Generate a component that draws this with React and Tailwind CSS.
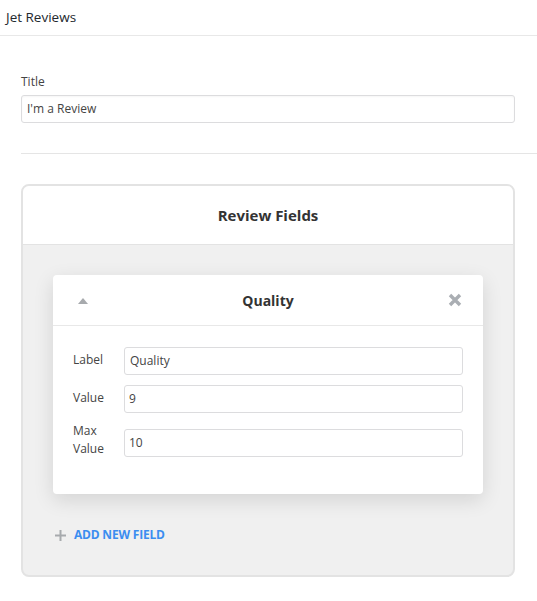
export default function App() {
  const font = { fontFamily: '"Open Sans", "Noto Sans", sans-serif' };
  return (
    <div className="w-[537px] h-[601px] bg-white text-[#444]" style={font}>
      <div className="h-[36px] border-b border-[#e8e8e8] pl-[6px] flex items-center text-[13.5px] text-[#23282d]">
        Jet Reviews
      </div>
      <div className="pl-[21px]">
        <div className="pt-[37px] pr-[22px]">
          <div className="text-[12px] text-[#444] leading-[16px] mt-[1px]">Title</div>
          <div className="mt-[5px] h-[28px] border border-[#dcdcde] rounded-[3px] flex items-center px-[5px] text-[12px] text-[#444] shadow-[inset_0_1px_2px_rgba(0,0,0,0.04)]">
            I'm a Review
          </div>
        </div>
        <div className="mt-[30px] border-t border-[#e5e5e5]" />
        <div className="mt-[30px] w-[494px] h-[393px] border-2 border-[#e3e3e3] rounded-[8px] overflow-hidden bg-[#f0f0f0] flex flex-col">
          <div className="h-[59px] bg-white border-b border-[#e3e3e3] flex items-center justify-center text-[15px] font-bold text-[#333]">
            Review Fields
          </div>
          <div className="px-[30px] pt-[30px]">
            <div className="bg-white rounded-[4px] shadow-[0_6px_20px_rgba(0,0,0,0.12)]">
              <div className="h-[51px] border-b border-[#e8e8e8] flex items-center px-[25px] relative">
                <svg width="10" height="6" viewBox="0 0 10 6" className="mt-[1px]">
                  <path d="M5 0 L10 6 L0 6 Z" fill="#a7aaad" />
                </svg>
                <div className="flex-1 text-center text-[14px] font-bold text-[#333]">Quality</div>
                <svg width="14" height="14" viewBox="0 0 14 14" className="mr-[-4px]">
                  <path d="M2 2 L12 12 M12 2 L2 12" stroke="#aaaeb3" strokeWidth="3.4" strokeLinecap="butt" />
                </svg>
              </div>
              <div className="pl-[20px] pr-[20px] pt-[21px] pb-[36px] flex flex-col gap-[10px]">
                <div className="flex items-center">
                  <div className="w-[51px] text-[12px] text-[#444] leading-[18px] -mt-[3px]">Label</div>
                  <div className="flex-1 h-[28px] border border-[#dcdcde] rounded-[3px] flex items-center px-[5px] text-[12px] text-[#444]">Quality</div>
                </div>
                <div className="flex items-center">
                  <div className="w-[51px] text-[12px] text-[#444] leading-[18px] -mt-[3px]">Value</div>
                  <div className="flex-1 h-[28px] border border-[#dcdcde] rounded-[3px] flex items-center px-[4px] text-[12px] text-[#444]">9</div>
                </div>
                <div className="flex items-center mt-[4px]">
                  <div className="w-[51px] text-[12px] text-[#444] leading-[18px] -mt-[5px]">Max<br />Value</div>
                  <div className="flex-1 h-[28px] border border-[#dcdcde] rounded-[3px] flex items-center px-[4px] text-[12px] text-[#444]">10</div>
                </div>
              </div>
            </div>
          </div>
          <div className="mt-[32px] pl-[32px] flex items-center gap-[8px]">
            <svg width="11" height="11" viewBox="0 0 11 11">
              <path d="M5.5 0 V11 M0 5.5 H11" stroke="#a7aaad" strokeWidth="2" />
            </svg>
            <span className="text-[12px] font-bold text-[#3b8df0] tracking-[-0.2px]">ADD NEW FIELD</span>
          </div>
        </div>
      </div>
    </div>
  );
}
